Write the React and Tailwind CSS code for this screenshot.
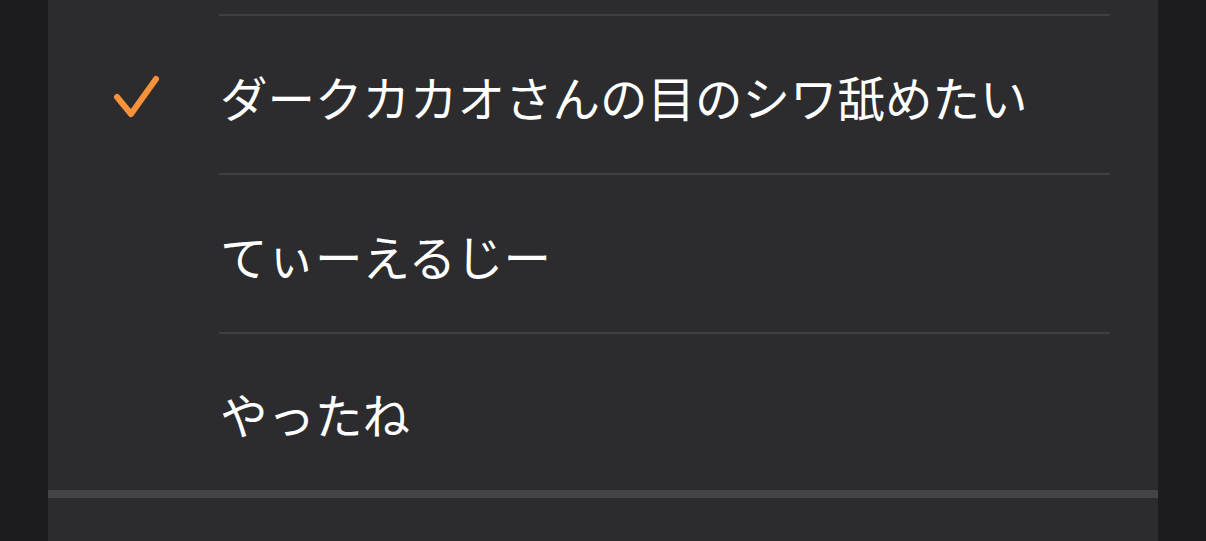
const items = [
  { label: "ダークカカオさんの目のシワ舐めたい", checked: true },
  { label: "てぃーえるじー", checked: false },
  { label: "やったね", checked: false },
];

const Check = () => (
  <svg width="50" height="50" viewBox="0 0 50 50" fill="none">
    <path
      d="M5 24 L19 41 L44 6"
      stroke="#f7923a"
      strokeWidth="6"
      strokeLinecap="round"
      strokeLinejoin="round"
    />
  </svg>
);

const Separator = () => (
  <div className="ml-[171px] mr-[48px] h-[2px] bg-[#3f3f42]"></div>
);

const Row = ({ label, checked, last }) => (
  <div className="flex flex-col">
    <div className={`flex items-center ${last ? "h-[156px]" : "h-[157px]"}`}>
      <div className="w-[172px] flex justify-end pr-[58px] pt-[6px]">
        {checked && <Check />}
      </div>
      <span className="text-white text-[47.5px] leading-none pt-[4px]">
        {label}
      </span>
    </div>
    {!last && <Separator />}
  </div>
);

export default function App() {
  return (
    <div
      className="w-[1206px] h-[541px] bg-[#1c1c1e] flex justify-center overflow-hidden"
      style={{ fontFamily: '"Noto Sans CJK JP", "Noto Sans", sans-serif' }}
    >
      <div className="w-[1110px] bg-[#2c2c2e] flex flex-col">
        <div className="h-[14px]"></div>
        <Separator />
        {items.map((item, i) => (
          <Row key={item.label} {...item} last={i === items.length - 1} />
        ))}
        <div className="h-[8px] bg-[#444447]"></div>
      </div>
    </div>
  );
}
